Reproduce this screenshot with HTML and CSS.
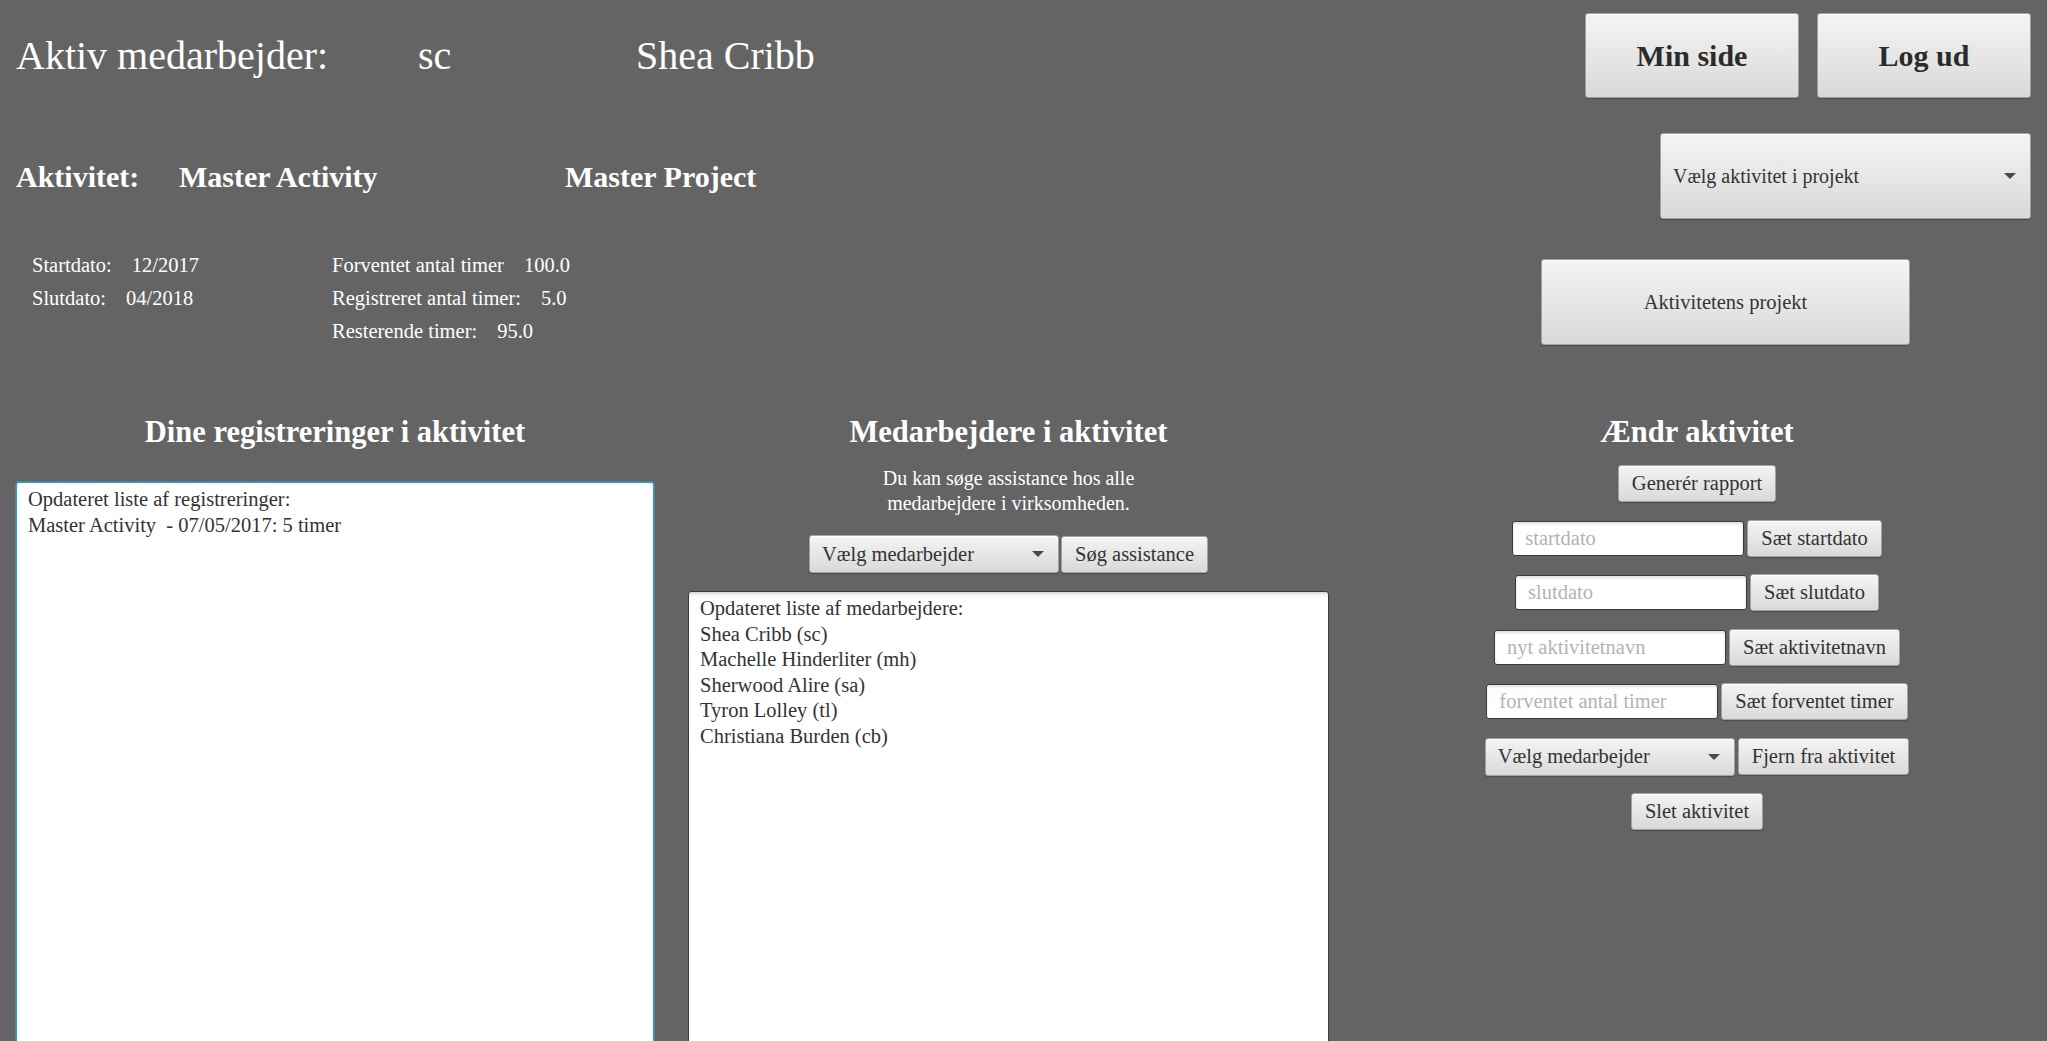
FILE: index.html
```html
<!DOCTYPE html>
<html lang="da">
<head>
<meta charset="utf-8">
<title>Aktivitet</title>
<link rel="stylesheet" href="styles.css">
</head>
<body>
<div class="page">
  <header class="top">
    <div class="info">
      <div class="who">
        <span class="who-label">Aktiv medarbejder:</span>
        <span class="who-id">sc</span>
        <span class="who-name">Shea Cribb</span>
      </div>
      <div class="activity">
        <span class="act-label">Aktivitet:</span>
        <span class="act-name">Master Activity</span>
        <span class="act-project">Master Project</span>
      </div>
      <div class="details">
        <div class="detail-group">
          <div class="detail"><span>Startdato:</span><span>12/2017</span></div>
          <div class="detail"><span>Slutdato:</span><span>04/2018</span></div>
        </div>
        <div class="detail-group">
          <div class="detail"><span>Forventet antal timer</span><span>100.0</span></div>
          <div class="detail"><span>Registreret antal timer:</span><span>5.0</span></div>
          <div class="detail"><span>Resterende timer:</span><span>95.0</span></div>
        </div>
      </div>
    </div>
    <div class="actions">
      <nav class="nav">
        <button class="btn btn-nav">Min side</button>
        <button class="btn btn-nav">Log ud</button>
      </nav>
      <button class="btn combo combo-project"><span>Vælg aktivitet i projekt</span><span class="caret"></span></button>
      <button class="btn btn-project">Aktivitetens projekt</button>
    </div>
  </header>

  <main class="columns">
    <section class="col">
      <h2 class="col-title">Dine registreringer i aktivitet</h2>
      <div class="list list-focused">
        <div>Opdateret liste af registreringer:</div>
        <div>Master Activity&nbsp; - 07/05/2017: 5 timer</div>
      </div>
    </section>

    <section class="col">
      <h2 class="col-title">Medarbejdere i aktivitet</h2>
      <p class="note">Du kan søge assistance hos alle<br>medarbejdere i virksomheden.</p>
      <div class="pair assist">
        <button class="btn combo"><span>Vælg medarbejder</span><span class="caret"></span></button>
        <button class="btn">Søg assistance</button>
      </div>
      <div class="list list-plain">
        <div>Opdateret liste af medarbejdere:</div>
        <div>Shea Cribb (sc)</div>
        <div>Machelle Hinderliter (mh)</div>
        <div>Sherwood Alire (sa)</div>
        <div>Tyron Lolley (tl)</div>
        <div>Christiana Burden (cb)</div>
      </div>
    </section>

    <section class="col">
      <h2 class="col-title">Ændr aktivitet</h2>
      <div class="form">
        <button class="btn">Generér rapport</button>
        <div class="pair">
          <input class="field" type="text" placeholder="startdato">
          <button class="btn">Sæt startdato</button>
        </div>
        <div class="pair">
          <input class="field" type="text" placeholder="slutdato">
          <button class="btn">Sæt slutdato</button>
        </div>
        <div class="pair">
          <input class="field" type="text" placeholder="nyt aktivitetnavn">
          <button class="btn">Sæt aktivitetnavn</button>
        </div>
        <div class="pair">
          <input class="field" type="text" placeholder="forventet antal timer">
          <button class="btn">Sæt forventet timer</button>
        </div>
        <div class="pair">
          <button class="btn combo"><span>Vælg medarbejder</span><span class="caret"></span></button>
          <button class="btn">Fjern fra aktivitet</button>
        </div>
        <button class="btn">Slet aktivitet</button>
      </div>
    </section>
  </main>
</div>
</body>
</html>
```

FILE: styles.css
```css
* {
  box-sizing: border-box;
}

html,
body {
  margin: 0;
  height: 100%;
  overflow: hidden;
}

body {
  background: #646464;
  color: #ffffff;
  font-family: "Liberation Serif", "Times New Roman", serif;
}

.page {
  padding: 13px 16px 0 16px;
}

/* ---------- top area ---------- */
.top {
  display: flex;
  justify-content: space-between;
}

.info {
  display: flex;
  flex-direction: column;
}

.who {
  display: flex;
  height: 85px;
  line-height: 85px;
  font-size: 40px;
  white-space: nowrap;
}

.who-label {
  width: 402px;
}

.who-id {
  width: 218px;
}

.activity {
  display: flex;
  margin-top: 59px;
  line-height: 40px;
  font-size: 30px;
  font-weight: bold;
  white-space: nowrap;
}

.act-label {
  width: 163px;
}

.act-name {
  width: 386px;
}

.details {
  display: grid;
  grid-template-columns: 300px auto;
  margin-top: 52px;
  padding-left: 16px;
  font-size: 20.5px;
  line-height: 33px;
  white-space: nowrap;
}

.detail {
  display: flex;
  gap: 20px;
}

.actions {
  width: 490px;
  display: flex;
  flex-direction: column;
  align-items: flex-end;
}

.nav {
  display: flex;
  gap: 18px;
}

/* ---------- controls ---------- */
.btn {
  font-family: inherit;
  font-size: 20.5px;
  color: #333333;
  height: 37px;
  padding: 0 13px;
  background: linear-gradient(#f4f4f4, #d9d9d9);
  border: 1px solid #a2a2a2;
  border-radius: 3px;
  box-shadow: inset 0 1px 0 rgba(255, 255, 255, 0.85), 0 1px 1px rgba(0, 0, 0, 0.25);
  white-space: nowrap;
  cursor: pointer;
}

.btn-nav {
  width: 214px;
  height: 85px;
  font-size: 30px;
  font-weight: bold;
  color: #2b2b2b;
}

.combo {
  width: 250px;
  height: 38px;
  display: flex;
  align-items: center;
  justify-content: space-between;
  padding: 0 12px;
  text-align: left;
}

.combo-project {
  margin-top: 35px;
  width: 371px;
  height: 86px;
  font-size: 20px;
}

.caret {
  width: 0;
  height: 0;
  border-left: 6px solid transparent;
  border-right: 6px solid transparent;
  border-top: 6px solid #4a4a4a;
  margin-right: 2px;
}

.btn-project {
  align-self: flex-start;
  margin-top: 40px;
  width: 369px;
  height: 86px;
}

.field {
  width: 232px;
  height: 35px;
  padding: 0 12px;
  font-family: inherit;
  font-size: 20.5px;
  color: #333333;
  background: #ffffff;
  border: 1px solid #3a3a3a;
  border-radius: 3px;
  box-shadow: inset 0 2px 3px rgba(0, 0, 0, 0.12);
  outline: none;
}

.field::placeholder {
  color: #b3b3b3;
}

/* ---------- columns ---------- */
.columns {
  display: grid;
  grid-template-columns: 638px 641px 1fr;
  column-gap: 34px;
  margin-top: 64px;
}

.col {
  display: flex;
  flex-direction: column;
  align-items: center;
}

.col-title {
  margin: 0;
  font-size: 30.5px;
  line-height: 40px;
  font-weight: bold;
  white-space: nowrap;
}

.list {
  align-self: stretch;
  height: 700px;
  padding: 4px 11px;
  background: #ffffff;
  color: #333333;
  font-size: 20.5px;
  line-height: 25.5px;
  border-radius: 3px;
  white-space: nowrap;
}

.list-focused {
  margin-top: 30px;
  border: 1px solid #1fa3dc;
  box-shadow: 0 0 0 1px rgba(60, 170, 220, 0.45);
}

.list-plain {
  margin-top: 18px;
  border: 1px solid #3a3a3a;
  box-shadow: inset 0 4px 4px -3px rgba(0, 0, 0, 0.25);
}

.note {
  margin: 14px 0 0;
  text-align: center;
  font-size: 20px;
  line-height: 25px;
}

.pair {
  display: flex;
  align-items: center;
  gap: 3px;
}

.assist {
  margin-top: 19px;
  gap: 2px;
}

.form {
  margin-top: 13px;
  display: flex;
  flex-direction: column;
  align-items: center;
  gap: 17.5px;
}
```
